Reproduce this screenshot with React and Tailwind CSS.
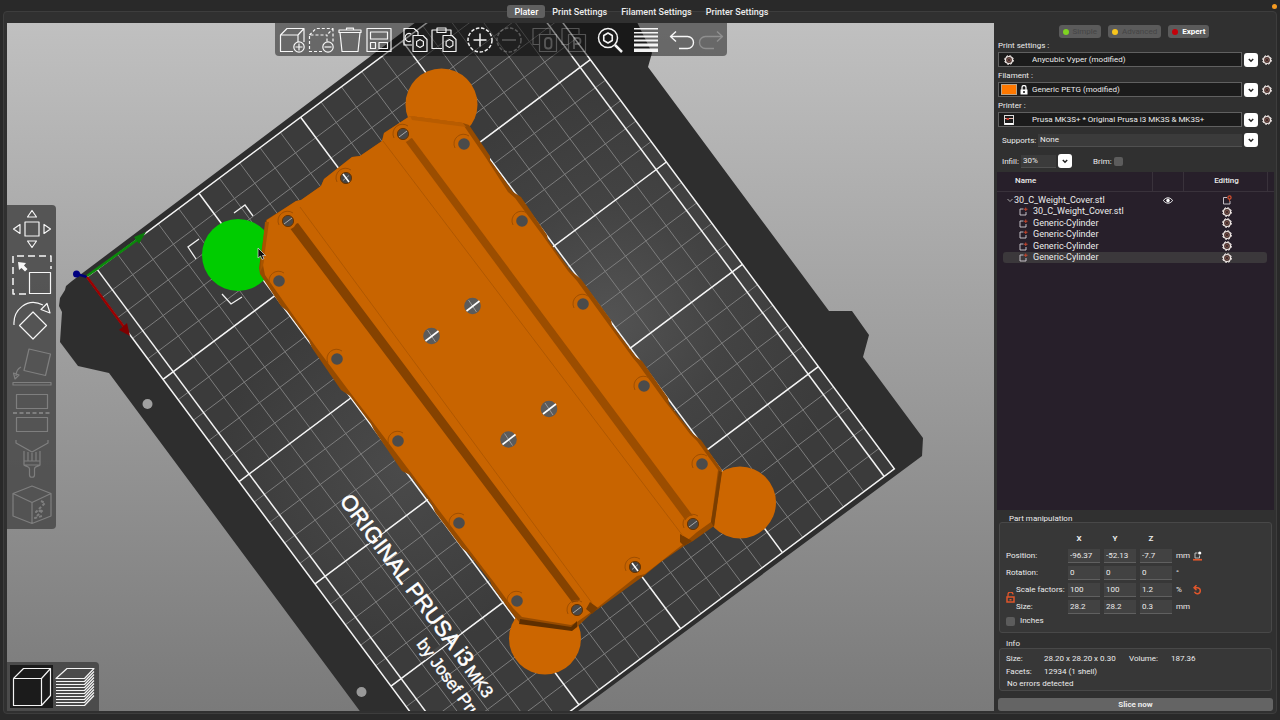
import React from "react";

const range = (from, to, step) => {
  const out = [];
  for (let v = from; v <= to; v += step) out.push(v);
  return out;
};

/* ---------- small icons ---------- */

function Gear({ className = "size-[10px]" }) {
  return (
    <svg viewBox="0 0 20 20" className={className} aria-hidden="true">
      <circle cx="10" cy="10" r="7" fill="#4a3532" stroke="#f0e8e5" strokeWidth="2.4" />
      <circle cx="10" cy="10" r="8.8" fill="none" stroke="#f3ecea" strokeWidth="2" strokeDasharray="3.9 3" />
      <circle cx="10" cy="10" r="3" fill="#2a2022" stroke="#8a5a50" strokeWidth="1.6" />
    </svg>
  );
}

function Chevron() {
  return (
    <span aria-hidden="true" className="flex size-[14px] shrink-0 items-center justify-center rounded-[3px] bg-white">
      <svg viewBox="0 0 14 14" className="size-[14px]">
        <path d="M4.8 6 L7 8.2 L9.2 6" fill="none" stroke="#222" strokeWidth="1.5" />
      </svg>
    </span>
  );
}

function PrinterIcon() {
  return (
    <svg viewBox="0 0 20 20" className="size-[10px]" aria-hidden="true">
      <rect x="1" y="1" width="18" height="18" fill="#1b1b1b" stroke="#ddd" strokeWidth="2" />
      <path d="M2 7 H18" stroke="#e8b9ae" strokeWidth="2" />
      <path d="M5 6 h5 v4 h-5z" fill="#c0392b" />
      <path d="M2 17.5 H18" stroke="#fff" strokeWidth="3" />
    </svg>
  );
}

function PartIcon() {
  return (
    <svg viewBox="0 0 18 18" className="size-[9px]" aria-hidden="true">
      <path d="M9 4 H2 V16 H14 V10" fill="none" stroke="#d5cfd6" strokeWidth="1.8" />
      <path d="M13.5 1 V8 M10 4.5 H17" stroke="#c8452c" strokeWidth="2" />
    </svg>
  );
}

function ObjectIcon() {
  return (
    <svg viewBox="0 0 20 20" className="size-[10px]" aria-hidden="true">
      <path d="M10 5 H3 V18 H16 V12" fill="none" stroke="#d5cfd6" strokeWidth="1.8" />
      <circle cx="15" cy="5" r="3.2" fill="none" stroke="#d8512f" strokeWidth="2.4" />
      <path d="M15 8 V13" stroke="#d8512f" strokeWidth="1.6" />
    </svg>
  );
}

function Icon({ children, dim, size = "size-[26px]", box = "0 0 26 26" }) {
  return (
    <svg
      viewBox={box}
      aria-hidden="true"
      className={size}
      fill="none"
      stroke="#fff"
      strokeWidth="1.2"
      opacity={dim ? 0.25 : 0.95}
      strokeLinejoin="round"
    >
      {children}
    </svg>
  );
}

const hex = "M0 -4 L3.4 -2 V2 L0 4 L-3.4 2 V-2 Z";

const toolGroups = [
  [
    ["Add", false, <><path d="M14 24.500 H1.500 V8 H19 V15 M1.500 8 L8 1.500 H25 L19 8 M25 1.500 V15" /><circle cx="20" cy="20" r="5.200" /><path d="M20 16.500 V23.500 M16.500 20 H23.500" /></>],
    ["Delete", false, <><path strokeDasharray="3 2" d="M14 24.500 H1.500 V8 H19 V15 M1.500 8 L8 1.500 H25 L19 8 M25 1.500 V15" /><circle cx="20" cy="20" r="5.200" /><path d="M16.500 20 H23.500" /></>],
    ["Delete all", false, <><path d="M3 5.500 L5 24.500 H21 L23 5.500" /><path d="M2 3 H24 V5.500 H2 Z M9.500 3 V1.200 H16.500 V3" /></>],
    ["Arrange", false, <><rect x="1" y="1.500" width="24" height="23" /><rect x="4.500" y="5" width="17" height="7" /><rect x="4.500" y="15.500" width="5" height="6" /><rect x="13" y="15.500" width="8.500" height="6" /></>],
  ],
  [
    ["Copy", false, <><path d="M10 18 H2 V1.500 H12 L16 5 V8" /><path d="M9 7 A4 4 0 1 0 9 14" /><path d="M11 24.500 V8.500 H21 L25 12.500 V24.500 Z" /><path d={hex} transform="translate(18 16.500)" /></>],
    ["Paste", false, <><path d="M11 21.500 H1 V3 H20 V8" /><path d="M6 5.500 V1 H15 V5.500 Z" /><path d="M12 24.500 V8.500 H21 L25 12.500 V24.500 Z" /><path d={hex} transform="translate(18.500 16.500)" /></>],
  ],
  [
    ["Add instance", false, <><circle cx="13" cy="13" r="12" strokeDasharray="3.500 1.700" strokeWidth="1.500" /><path d="M13 6.500 V19.500 M6.500 13 H19.500" strokeWidth="1.500" /></>],
    ["Remove instance", true, <><circle cx="13" cy="13" r="12" strokeDasharray="3.500 1.700" strokeWidth="1.500" /><path d="M6 13 H20" strokeWidth="1.500" /></>],
  ],
  [
    ["Split to objects", true, <><path d="M8 17.500 H1 V1.500 H18 V7" /><rect x="7.500" y="7.500" width="17" height="17" /><rect x="13" y="11" width="6.500" height="10.500" rx="3" strokeWidth="1.800" /></>],
    ["Split to parts", true, <><path d="M8 17.500 H1 V1.500 H18 V7" /><rect x="7.500" y="7.500" width="17" height="17" /><path d="M13 22 V11 H16.500 A2.800 2.800 0 0 1 16.500 17 H13" strokeWidth="1.800" /></>],
  ],
  [["Search", false, <><circle cx="11" cy="11" r="9.500" strokeWidth="1.500" /><path transform="translate(11 11) scale(1.250)" d={hex} strokeWidth="1.300" /><path d="M18 18 L25 25" strokeWidth="2.500" /></>]],
  [["Variable layer height", false, <g stroke="none" fill="#fff"><rect x="1" y="1" width="24" height="1.500" /><rect x="1" y="5" width="24" height="1.500" /><rect x="1" y="8.500" width="24" height="2" /><rect x="1" y="12.500" width="24" height="2" /><rect x="1" y="16.500" width="24" height="3" /><rect x="1" y="21.500" width="24" height="3.500" /></g>]],
  [
    ["Undo", false, <path d="M7 4.500 L1.500 9.500 L7 14.500 M1.500 9.500 H18.500 A5.800 5.800 0 0 1 18.500 21.500 H10" strokeWidth="1.400" />],
    ["Redo", true, <path d="M19 4.500 L24.500 9.500 L19 14.500 M24.500 9.500 H7.500 A5.800 5.800 0 0 0 7.500 21.500 H16" strokeWidth="1.400" />],
  ],
];

const gizmos = [
  ["Move", false, <><rect x="13" y="13" width="14" height="14" /><path d="M20 1.500 L24.500 8 H15.500 Z M20 38.500 L24.500 32 H15.500 Z M1.500 20 L8 15.500 V24.500 Z M38.500 20 L32 15.500 V24.500 Z" /></>],
  ["Scale", false, <><path strokeDasharray="7 4" strokeWidth="1.500" d="M14 39 H1 V1 H39 V14" /><rect x="17.500" y="17.500" width="21" height="21" /><path fill="#fff" stroke="none" d="M6 7 L14 8 L12 10.500 L15.500 14 L13 16.500 L9.500 13 L7 15 Z" /></>],
  ["Rotate", false, <><path d="M21 11 L34.500 24.500 L21 38 L7.500 24.500 Z" /><path d="M2 24 C1 9 15 -4 31 4 M29 8.500 L35 2.500 L38 12 Z" /></>],
  ["Place on face", true, <><path d="M17 2 L38.500 7 L33.500 28.500 L12 23.500 Z" /><path d="M9 20 C5 22 4 26 4 29 M1.500 26 L3 32 L7 28 Z" /><rect x="1" y="35.500" width="38" height="2.500" /></>],
  ["Cut", true, <><rect x="4.500" y="1.500" width="31" height="14" /><path strokeDasharray="4 2.500" strokeWidth="1.800" d="M1 20 H39" /><rect x="4.500" y="24.500" width="31" height="14" /></>],
  ["Paint-on supports", true, <><path d="M4 1 V4 L20 13 L36 4 V1" /><path d="M12 12 V26 H28 V12 M12 22 H28 M16 13 V22 M20 14 V22 M24 13 V22 M12 26 C14 28 17.500 27 17.500 30 V36 C17.500 39 22.500 39 22.500 36 V30 C22.500 27 26 28 28 26" /></>],
  ["Seam painting", true, <><path d="M20 1 L39 8.500 V31 L20 38.500 L1 31 V8.500 Z M1 8.500 L20 17.500 L39 8.500 M20 17.500 V38.500" /><path strokeWidth="2" strokeDasharray="3 2" d="M29 16 L33 18 L24 27 L31 25 L23 33 L30 31" /></>],
];

/* ---------- 3D scene ---------- */

const rimHoles = [
  [464, 144], [522, 221], [583, 304], [644, 386], [702, 464],
  [279, 281], [337, 359], [398, 441], [459, 523], [517, 601],
];
const cornerHoles = [[403, 134], [288, 221], [693, 524], [577, 610]];
const endHoles = [[346, 178], [635, 567]];
const centreHoles = [[472.5, 306], [431.500, 336], [549, 409], [508.500, 439.500]];

function Scene() {
  return (
    <svg
      viewBox="7 23 987 688"
      preserveAspectRatio="xMidYMid slice"
      className="absolute inset-0 size-full"
      role="img"
      aria-label="Print bed with model"
    >
      <defs>
        <radialGradient id="glowA" gradientUnits="userSpaceOnUse" cx="610" cy="320" r="230">
          <stop offset="0" stopColor="#535353" />
          <stop offset="0.500" stopColor="#434343" />
          <stop offset="1" stopColor="#3b3b3b" />
        </radialGradient>
        <radialGradient id="glowB" gradientUnits="userSpaceOnUse" cx="400" cy="470" r="180">
          <stop offset="0" stopColor="#4a4a4a" />
          <stop offset="1" stopColor="#4a4a4a" stopOpacity="0" />
        </radialGradient>
      </defs>

      <path
        fill="#2e2e2e"
        d="M416 22 L72 281 L66 286 L65 290 L60 298 L59 306 L62 312 L60 342 L78 366 L109 373 L362 714 L574 714 L922 456 L923 438 L863 357 L869 335 L852 311 L829 311 L648 67 L652 53 L637 22 Z"
      />
      <circle cx="147.500" cy="404" r="5" fill="#a0a0a0" />
      <circle cx="361.500" cy="692" r="5" fill="#999" />

      <path d="M87 277 L514.400 -42.600 L894.400 468.900 L467 788.500 Z" fill="url(#glowA)" />
      <path d="M87 277 L514.400 -42.600 L894.400 468.900 L467 788.500 Z" fill="url(#glowB)" />

      <g transform="matrix(1.52 2.046 2.035 -1.522 87 277)" fill="none">
        <g stroke="#7d7d7d" strokeWidth="1">
          {range(10, 240, 10).map((x) => (
            <path key={"x" + x} d={`M${x} 0 V210`} vectorEffect="non-scaling-stroke" />
          ))}
          {range(15, 195, 10).map((y) => (
            <path key={"y" + y} d={`M0 ${y} H250`} vectorEffect="non-scaling-stroke" />
          ))}
        </g>
        <g stroke="#f4f4f4" strokeWidth="1.500">
          {range(50, 200, 50).map((x) => (
            <path key={"x" + x} d={`M${x} 0 V210`} vectorEffect="non-scaling-stroke" />
          ))}
          {range(5, 205, 50).map((y) => (
            <path key={"y" + y} d={`M0 ${y} H250`} vectorEffect="non-scaling-stroke" />
          ))}
          <path d="M0 0 H250 V210 H0 Z" vectorEffect="non-scaling-stroke" />
        </g>
      </g>

      {/* bed label; dark backing interrupts the bright grid lines */}
      <path d="M384 530 L367 543 M460 632 L424 659" stroke="#464646" strokeWidth="3" />
      <g fill="#fff" className="font-['Liberation_Sans',Arial,sans-serif]">
        <text transform="translate(339 501) rotate(53.400)" fontSize="22" stroke="#fff" strokeWidth="0.600">ORIGINAL PRUSA i3</text>
        <text transform="translate(464 671) rotate(53.400)" fontSize="17" stroke="#fff" strokeWidth="0.400">MK3</text>
        <text transform="translate(416 644) rotate(53.400)" fontSize="17" stroke="#fff" strokeWidth="0.400">by Josef Pru</text>
      </g>

      {/* axes */}
      <path d="M87 277 L77 274" stroke="#00007a" strokeWidth="2.500" />
      <circle cx="76.500" cy="274" r="3.500" fill="#000080" />
      <path d="M87 276 L137 240" stroke="#0a8a0a" strokeWidth="2.500" />
      <path d="M134 237 L146 232 L139 244 Z" fill="#0a7a0a" />
      <path d="M87 277 L124 327" stroke="#9a0000" strokeWidth="2.500" />
      <path d="M119 330 L130 336 L127 323 Z" fill="#800000" />

      {/* corner discs */}
      <circle cx="238" cy="255" r="36" fill="#00cc00" />
      <g fill="#cc6600">
        <circle cx="441.500" cy="104.500" r="36" />
        <circle cx="740" cy="502.500" r="36" />
        <circle cx="545" cy="638.500" r="36" />
      </g>
      <g fill="none" stroke="#f0f0f0" strokeWidth="1.300">
        <path d="M234 213 L245 205 L253 216" />
        <path d="M199 239 L188 247 L196 259" />
        <path d="M222 294 L231 304 L242 297" />
      </g>

      {/* model body: shaded flanks, then the top face */}
      <path
        fill="#964b00"
        d="M266 220 L296 201 L301 200 L321 186 L324 179 L352 157 L360 156 L382 141 L384 133 L410 116 L463 123 L469 125 L490 156 L490 160 L513 192 L521 197 L547 235 L548 240 L571 271 L581 279 L611 320 L612 325 L636 357 L642 361 L668 398 L669 404 L693 434 L701 440 L722 470 L714 526 L693 541 L684 546 L661 562 L645 575 L598 609 L592 613 L577 627 L572 630 L520 623 L511 612 L492 586 L490 581 L468 553 L462 548 L435 512 L432 505 L410 475 L402 471 L374 430 L371 424 L350 396 L341 390 L312 348 L309 341 L287 311 L281 306 L260 274 L259 268 Z"
      />
      <path
        fill="#c86400"
        d="M267 220 L296 201 L301 200 L321 186 L324 179 L352 157 L360 156 L382 141 L384 133 L410 116 L462 123 L486 158 L508 192 L515 198 L543 236 L568 271 L577 281 L606 321 L633 358 L638 364 L664 400 L690 434 L697 441 L718 470 L711 522 L697 532 L682 545 L645 574 L637 576 L597 608 L577 622 L571 625 L522 617 L513 608 L496 585 L470 551 L438 509 L412 474 L378 429 L352 395 L316 347 L291 312 L265 275 L263 265 Z"
      />
      <path d="M269 222 L263 266 L260 272 L265 222 Z" fill="#a85400" />
      <path d="M520 619 L571 627 L577 621 L577 627 L572 631 L519 624 Z" fill="#5e2f00" />
      <path d="M719 471 L711 522 L714 527 L722 472 Z" fill="#7a3d00" />
      <path d="M410 116 L463 123 L466 127 L412 120 Z" fill="#b85c00" />
      <path d="M680 534 L692 541 L684 546 L680 542 Z M590 602 L598 608 L592 614 L586 609 Z" fill="#7a3d00" />

      {/* channels and seams */}
      <path d="M289 227 L298 223 L580 599 L575 606 Z" fill="#854200" />
      <path d="M405 141 L412 138 L693 516 L686 521 Z" fill="#9b4d00" />
      <g fill="none" stroke="#b05800" strokeWidth="1">
        <path d="M300 207 L592 603" />
        <path d="M383 141 L683 536" />
      </g>

      <g fill="none" stroke="#a04f00" strokeWidth="1">
        {[...rimHoles, ...cornerHoles, ...endHoles].map(([x, y]) => (
          <path key={x} d={`M${x - 9} ${y + 4} A9.500 9.500 0 0 1 ${x + 5} ${y - 8}`} />
        ))}
      </g>
      {cornerHoles.map(([x, y]) => (
        <circle key={x} cx={x} cy={y} r="8.500" fill="#c86400" />
      ))}
      {rimHoles.map(([x, y]) => (
        <circle key={x} cx={x} cy={y} r="5.800" fill="#4b4b4b" />
      ))}
      {cornerHoles.map(([x, y]) => (
        <g key={x}>
          <circle cx={x} cy={y} r="5.600" fill="#484848" stroke="#6a3500" />
          <path d={`M${x - 4} ${y + 3} L${x + 4} ${y - 3}`} stroke="#aaa" />
        </g>
      ))}
      {endHoles.map(([x, y]) => (
        <g key={x}>
          <circle cx={x} cy={y} r="5.600" fill="#444" stroke="#6a3500" />
          <path d={`M${x - 3} ${y + 2.500} L${x + 3} ${y - 2.500}`} stroke="#999" />
          <path d={`M${x - 3} ${y - 4} L${x + 3} ${y + 4}`} stroke="#fff" strokeWidth="1.600" />
        </g>
      ))}
      {centreHoles.map(([x, y]) => (
        <g key={x}>
          <circle cx={x} cy={y} r="8.300" fill="#5b5b5b" />
          <path d={`M${x - 4} ${y - 6} L${x + 4} ${y + 6}`} stroke="#999" />
          <path d={`M${x - 6} ${y + 5} L${x + 7} ${y - 5}`} stroke="#fff" strokeWidth="1.600" />
        </g>
      ))}

      <path
        d="M258 248 V258 L260.500 256 L262 259.500 L264 258.500 L262.500 255.500 H265.500 Z"
        fill="#111"
        stroke="#ddd"
        strokeWidth="0.700"
      />
    </svg>
  );
}

function Viewport() {
  return (
    <main className="relative min-w-0 flex-1 overflow-hidden bg-linear-to-b from-[#c0c0c0] to-[#7a7a7a]">
      <Scene />
      <div className="absolute inset-x-0 top-0 flex justify-center">
        <div className="flex h-[33px] gap-[7px] rounded-b-[4px] bg-black/45 pr-[1px] pl-[3px]">
          {toolGroups.map((group, i) => (
            <div key={i} className="flex">
              {group.map(([name, dim, art]) => (
                <button key={name} type="button" aria-label={name} className="flex w-[29px] items-center justify-center">
                  <Icon dim={dim}>{art}</Icon>
                </button>
              ))}
            </div>
          ))}
        </div>
      </div>
      <div className="absolute inset-y-0 left-0 flex items-center">
        <div className="flex flex-col rounded-r-[4px] bg-[#505050]/95 py-[1px]">
          {gizmos.map(([name, dim, art]) => (
            <button key={name} type="button" aria-label={name} className="flex h-[46px] w-[49px] items-center justify-center">
              <Icon dim={dim} size="size-[40px]" box="0 0 40 40">{art}</Icon>
            </button>
          ))}
        </div>
      </div>
      <div className="absolute bottom-0 left-0 flex h-[49px] rounded-tr-[4px] bg-[#4b4b4b] p-[3px]">
        <button type="button" aria-label="3D editor view" className="flex w-[43px] items-center justify-center bg-[#1b1b1b]">
          <Icon size="size-[40px]" box="0 0 40 40">
            <path d="M1.500 11.500 H29.500 V38.500 H1.500 Z M1.500 11.500 L11.500 1.500 H38.500 L29.500 11.500 M38.500 1.500 V28.500 L29.500 38.500" />
          </Icon>
        </button>
        <button type="button" aria-label="Preview" className="flex w-[43px] items-center justify-center">
          <Icon size="size-[40px]" box="0 0 40 40">
            <path d="M1 11.500 L12 1.500 H39 L29.500 11.500 Z" />
            {range(14, 38, 3).map((y) => (
              <path key={y} d={`M1 ${y + 0.5} H29.500 L39 ${y - 9.5}`} />
            ))}
          </Icon>
        </button>
      </div>
    </main>
  );
}

/* ---------- sidebar ---------- */

const modes = [
  ["Simple", "bg-[#7ed321]", "text-[#454545]"],
  ["Advanced", "bg-[#f8c51c]", "text-[#454545]"],
  ["Expert", "bg-[#c4000a]", "font-bold text-white"],
];

function Preset({ id, label, value, icon }) {
  return (
    <div>
      <label htmlFor={id} className="block h-[15px] leading-[17px]">{label}</label>
      <div className="flex h-[15px] items-center gap-[2px]">
        <div className="relative flex min-w-0 flex-1">
          <span className="pointer-events-none absolute inset-y-0 left-[3px] flex items-center gap-[3px]">{icon}</span>
          <select id={id} className="h-[15px] w-full appearance-none border border-[#606060] bg-[#1b1b1b] pl-[33px] leading-[13px]">
            <option>{value}</option>
          </select>
        </div>
        <Chevron />
        <button type="button" aria-label={"Edit " + label} className="ml-[2px]"><Gear /></button>
      </div>
    </div>
  );
}

const objectRows = ["30_C_Weight_Cover.stl", "Generic-Cylinder", "Generic-Cylinder", "Generic-Cylinder", "Generic-Cylinder"];

function ObjectList() {
  return (
    <div className="-mx-[1px] min-h-0 flex-1 bg-[#271f2a] text-[9px]">
      <table className="w-full table-fixed border-collapse text-left text-[8px]">
        <colgroup>
          <col />
          <col className="w-[31px]" />
          <col className="w-[84px]" />
          <col className="w-[7px]" />
        </colgroup>
        <thead>
          <tr className="h-[19px] border-b border-[#39323b] leading-[18px]">
            <th className="pl-[18px] font-medium">Name</th>
            <th aria-label="Visible" className="border-x border-[#39323b]" />
            <th className="border-r border-[#39323b] pl-[3px] text-center font-medium">Editing</th>
            <td />
          </tr>
        </thead>
      </table>
      <table className="mt-[3px] h-[69px] w-full table-fixed border-separate border-spacing-0">
        <tbody>
          <tr className="leading-[11px]">
            <td className="p-0">
              <div className="flex items-center pl-[9px]">
                <svg viewBox="0 0 8 8" className="size-[8px]" aria-hidden="true"><path d="M1.500 3 L4 5.500 L6.500 3" fill="none" stroke="#aaa" /></svg>
                30_C_Weight_Cover.stl
              </div>
            </td>
            <td className="w-[31px] p-0">
              <svg viewBox="0 0 20 14" className="mx-auto h-[7px] w-[10px]" aria-hidden="true">
                <path d="M1 7 C5 0 15 0 19 7 C15 14 5 14 1 7 Z" fill="none" stroke="#fff" strokeWidth="2" />
                <circle cx="10" cy="7" r="3.500" fill="#fff" />
              </svg>
            </td>
            <td className="w-[84px] p-0"><div className="flex justify-center pl-[3px]"><ObjectIcon /></div></td>
            <td className="w-[7px] p-0" />
          </tr>
          {objectRows.map((name, i) => {
            const tone = i === 4 ? "bg-[#3b383b]" : "";
            return (
              <tr key={i} className="leading-[11px]">
                <td className="p-0 pl-[6px]">
                  <div className={"flex items-center gap-[5px] rounded-l-[3px] pl-[16px] " + tone}>
                    <PartIcon />
                    {name}
                  </div>
                </td>
                <td className="p-0"><div className={"h-[11px] " + tone} /></td>
                <td className="p-0">
                  <div className={"flex h-[11px] items-center justify-center rounded-r-[3px] pl-[3px] " + tone}>
                    <Gear />
                  </div>
                </td>
                <td className="p-0" />
              </tr>
            );
          })}
        </tbody>
      </table>
    </div>
  );
}

const manipulation = [
  ["Position:", ["-96.37", "-52.13", "-7.7"], "mm"],
  ["Rotation:", ["0", "0", "0"], "°"],
  ["Scale factors:", ["100", "100", "1.2"], "%"],
  ["Size:", ["28.2", "28.2", "0.3"], "mm"],
];

function Manipulation() {
  return (
    <section className="mt-[3px]">
      <h2 className="h-[8px] pl-[11px] leading-[12px]">Part manipulation</h2>
      <div className="mx-[1px] mt-[1px] rounded-[3px] border border-[#484848] bg-[#373737] px-[6px] pt-[7px] pb-[5px]">
        <div className="relative">
          <svg viewBox="0 0 18 22" className="absolute top-[62px] left-0 h-[11px] w-[9px]" aria-hidden="true">
            <path d="M4 10 V5 A4 4 0 0 1 14 5" fill="none" stroke="#e0562b" strokeWidth="2.500" />
            <rect x="2" y="10" width="14" height="10" fill="none" stroke="#e0562b" strokeWidth="3" />
            <rect x="7" y="14" width="4" height="3" fill="#e0562b" />
          </svg>
          <table className="border-collapse">
            <thead>
              <tr className="h-[17px] leading-[14px]">
                <td className="w-[62px] p-0" />
                {["X", "Y", "Z"].map((a) => (
                  <th key={a} className="w-[36px] p-0 pr-[14px] text-center font-bold">{a}</th>
                ))}
                <td className="w-[17px] p-0" />
                <td className="w-[14px] p-0" />
              </tr>
            </thead>
            <tbody>
              {manipulation.map(([label, values, unit], r) => (
                <tr key={label} className="h-[17px]">
                  <th className={"p-0 text-left font-normal whitespace-nowrap " + (r > 1 ? "pl-[10px]" : "")}>{label}</th>
                  {values.map((v, c) => (
                    <td key={c} className="p-0">
                      <input
                        aria-label={label + " " + "XYZ"[c]}
                        defaultValue={v}
                        className="block h-[14px] w-[32px] border-b border-[#606060] bg-[#424242] px-[2px]"
                      />
                    </td>
                  ))}
                  <td className="p-0">{unit}</td>
                  <td className="p-0">
                    {r === 0 && (
                      <button type="button" aria-label="Drop to bed" className="block">
                        <svg viewBox="0 0 18 20" className="h-[10px] w-[9px]" aria-hidden="true">
                          <path d="M9 4 H4 V14 H13 V9" fill="none" stroke="#ccc" strokeWidth="1.800" />
                          <circle cx="13.5" cy="4" r="3.2" fill="#fff" />
                          <path d="M0 17.500 H18" stroke="#e0562b" strokeWidth="3.400" />
                        </svg>
                      </button>
                    )}
                    {r === 2 && (
                      <button type="button" aria-label="Reset scale" className="block">
                        <svg viewBox="0 0 18 20" className="h-[10px] w-[9px]" aria-hidden="true">
                          <path d="M2 5.500 H9.500 A6 6 0 1 1 3 13.500 M7 0.500 L2 5.500 L7 10.500" fill="none" stroke="#e0562b" strokeWidth="3" />
                        </svg>
                      </button>
                    )}
                  </td>
                </tr>
              ))}
            </tbody>
          </table>
          <label className="flex h-[12px] items-center gap-[5px] leading-[12px]">
            <input type="checkbox" className="size-[9px] appearance-none rounded-[2px] bg-[#5c5c5c]" />
            Inches
          </label>
        </div>
      </div>
    </section>
  );
}

function Sidebar() {
  return (
    <aside className="flex w-[281px] shrink-0 flex-col pr-[2px] pl-[4px]">
      <div className="mt-[2px] flex h-[13px] justify-center gap-[7px] pr-[3px]">
        {modes.map(([name, dot, tone]) => (
          <button key={name} type="button" className={"flex items-center gap-[4px] rounded-[3px] bg-[#5b5b5b] px-[4px] leading-[13px] " + tone}>
            <span className={"size-[6px] rounded-full " + dot} />
            {name}
          </button>
        ))}
      </div>
      <div className="-mt-[1px] pr-[1px]">
        <Preset id="print" label="Print settings :" value="Anycubic Vyper (modified)" icon={<span className="pl-[3px]"><Gear /></span>} />
        <Preset
          id="filament"
          label="Filament :"
          value="Generic PETG (modified)"
          icon={
            <>
              <span className="h-[11px] w-[16px] border border-[#b9a58c] bg-[#ff7800]" />
              <svg viewBox="0 0 16 20" className="h-[10px] w-[8px]" aria-hidden="true">
                <path d="M4 10 V5 A4 4 0 0 1 12 5 V10" fill="none" stroke="#fff" strokeWidth="2.500" />
                <rect x="1" y="9" width="14" height="10" fill="#fff" />
                <rect x="6.500" y="12" width="3" height="4" fill="#111" />
              </svg>
            </>
          }
        />
        <Preset id="printer" label="Printer :" value="Prusa MK3S+ * Original Prusa i3 MK3S & MK3S+" icon={<span className="pl-[3px]"><PrinterIcon /></span>} />
      </div>
      <div className="mt-[6px] flex h-[14px] items-center gap-[2px] pr-[15px] pl-[4px]">
        <label htmlFor="supports" className="w-[34px] whitespace-nowrap">Supports:</label>
        <select id="supports" className="h-[13px] min-w-0 flex-1 appearance-none border-b border-[#505050] bg-[#3b3b3b] pl-[2px] leading-[12px]">
          <option>None</option>
        </select>
        <Chevron />
      </div>
      <div className="mt-[7px] flex h-[14px] items-center pl-[4px]">
        <label htmlFor="infill" className="w-[19px]">Infill:</label>
        <input id="infill" defaultValue="30%" className="mr-[2px] h-[13px] w-[35px] border-b border-[#505050] bg-[#3b3b3b] pl-[2px]" />
        <Chevron />
        <label htmlFor="brim" className="ml-[21px] w-[21px]">Brim:</label>
        <input id="brim" type="checkbox" className="size-[9px] appearance-none rounded-[2px] bg-[#5c5c5c]" />
      </div>
      <div className="h-[4px]" />
      <ObjectList />
      <Manipulation />
      <section className="mt-[5px]">
        <h2 className="h-[10px] pl-[8px] leading-[12px]">Info</h2>
        <div className="mx-[1px] h-[43px] rounded-[3px] border border-[#484848] bg-[#373737] px-[6px] pt-[3px] leading-[13px]">
          <dl className="grid grid-cols-[38px_85px_42px_1fr]">
            <dt>Size:</dt>
            <dd>28.20 x 28.20 x 0.30</dd>
            <dt>Volume:</dt>
            <dd>187.36</dd>
            <dt>Facets:</dt>
            <dd>12934 (1 shell)</dd>
          </dl>
          <p className="pl-[1px] leading-[12px]">No errors detected</p>
        </div>
      </section>
      <button type="button" className="mt-[7px] h-[13px] rounded-[3px] bg-[#646464] leading-[13px] font-bold">
        Slice now
      </button>
    </aside>
  );
}

const tabs = ["Plater", "Print Settings", "Filament Settings", "Printer Settings"];

export default function App() {
  return (
    <div className="relative flex h-screen flex-col bg-[#292929] px-[3px] pb-[6px] font-['Roboto',sans-serif] text-[8px] leading-[11px] text-[#ececec]">
      <span className="absolute top-[4px] right-[3px] size-[5px] rounded-full bg-[#f59b22]" />
      <nav className="relative z-10 mt-[5px] flex h-[13px] shrink-0 justify-center pl-[3px] text-[9px] font-medium">
        {tabs.map((name, i) => (
          <button key={name} type="button" className={"rounded-[3px] px-[7px] leading-[14px] " + (i === 0 ? "bg-[#606060] text-white" : "")}>
            {name}
          </button>
        ))}
      </nav>
      <div className="-mt-[7px] flex min-h-0 flex-1 rounded-[4px] border border-[#3d3d3d] bg-[#303030] pt-[11px] pr-[1px] pb-[2px] pl-[3px]">
        <Viewport />
        <Sidebar />
      </div>
    </div>
  );
}
